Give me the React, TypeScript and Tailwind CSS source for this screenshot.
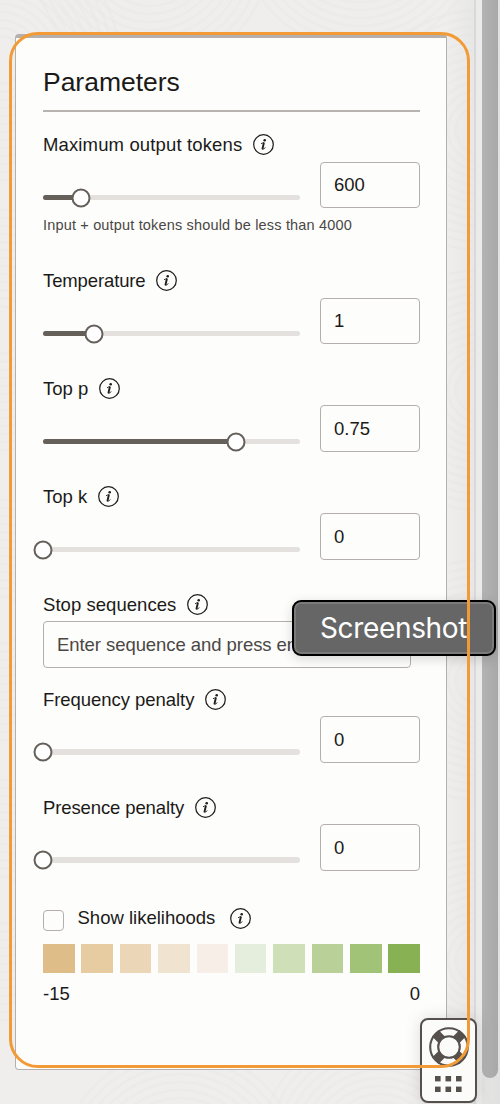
import React from 'react';

function InfoIcon() {
  return (
    <svg width="22" height="22" viewBox="0 0 22 22" className="shrink-0">
      <circle cx="10.5" cy="10.5" r="9.8" fill="none" stroke="#201e1c" strokeWidth="1.25" />
      <circle cx="11.7" cy="6.2" r="1.3" fill="#201e1c" />
      <path d="M8 9.8 Q9 8.8 11 8.8 M9.5 14 Q9.3 15.9 10.8 15 L12.2 13.4" fill="none" stroke="#201e1c" strokeWidth="0.9" />
      <path d="M10.8 9.2 L9.5 14.6" stroke="#201e1c" strokeWidth="1.9" strokeLinecap="round" />
    </svg>
  );
}

function Label({ text, tracking }: { text: string; tracking: string }) {
  return (
    <div className="flex h-[22px] items-center">
      <span className={`whitespace-nowrap text-[18.5px] leading-[22px] ${tracking}`}>{text}</span>
      <span className="ml-[10.5px]">
        <InfoIcon />
      </span>
    </div>
  );
}

type SliderProps = {
  label: string;
  tracking: string;
  value: string;
  fill: number;
  hint?: string;
  boxClass: string;
  trackClass: string;
  rowClass: string;
};

function SliderRow({ label, tracking, value, fill, hint, boxClass, trackClass, rowClass }: SliderProps) {
  return (
    <section className={rowClass}>
      <Label text={label} tracking={tracking} />
      <div className="flex justify-between">
        <div className={`relative w-[257px] rounded-full bg-[#e4e0de] ${trackClass}`}>
          <div className="h-full rounded-full bg-[#66605b]" style={{ width: fill }} />
          <div
            className="absolute top-1/2 size-[19px] -translate-x-1/2 -translate-y-1/2 rounded-full border-2 border-[#66605b] bg-white"
            style={{ left: fill }}
          />
        </div>
        <div className={`flex w-[100px] items-center rounded-[4px] border border-[#b5afab] px-[13px] text-[18.5px] ${boxClass}`}>
          {value}
        </div>
      </div>
      {hint && <p className="mt-[8px] whitespace-nowrap text-[14.5px] leading-[18px] tracking-[0.17px] text-[#4a4744]">{hint}</p>}
    </section>
  );
}

const swatches = [
  'bg-[#dfbd89]',
  'bg-[#e6cca0]',
  'bg-[#ebd7b8]',
  'bg-[#f0e4d0]',
  'bg-[#f7efe7]',
  'bg-[#e5eedc]',
  'bg-[#cfdfb7]',
  'bg-[#b9d198]',
  'bg-[#a1c377]',
  'bg-[#88b153]',
];

function Backdrop() {
  const centers = [
    [0, 60],
    [150, -50],
    [360, -70],
    [480, 130],
    [0, 330],
    [480, 390],
    [0, 620],
    [480, 680],
    [0, 900],
    [480, 960],
    [180, 1170],
    [380, 1150],
  ];
  return (
    <svg className="absolute inset-0" width="500" height="1104" fill="none" stroke="#e6e5e3" strokeWidth="2.5">
      {centers.map(([x, y]) =>
        [24, 32, 40, 48, 56, 64, 72, 80, 88, 96, 104, 112, 120].map((r) => (
          <circle key={`${x}-${y}-${r}`} cx={x} cy={y} r={r} opacity="0.3" />
        )),
      )}
    </svg>
  );
}

function HelpWidget() {
  return (
    <div className="absolute left-[420px] top-[1018px] flex h-[85px] w-[57px] flex-col items-center rounded-[8px] border-2 border-[#55504c] bg-[#fbfbfa] pt-[7px] shadow-[0_0_16px_rgba(0,0,0,0.13)]">
      <svg width="40" height="40" viewBox="0 0 40 40">
        <g stroke="#55504c" fill="none">
          <path d="M6.3 6.3 L13 13 M33.7 6.3 L27 13 M6.3 33.7 L13 27 M33.7 33.7 L27 27" strokeWidth="9" />
          <circle cx="20" cy="20" r="18.8" strokeWidth="2.1" />
          <circle cx="20" cy="20" r="10.8" strokeWidth="2.1" fill="#fbfbfa" />
        </g>
      </svg>
      <svg width="27" height="16" viewBox="0 0 27 16" className="mt-[9px]" fill="#55504c">
        {[0, 10.5, 21].map((x) => (
          <g key={x}>
            <rect x={x} y="0" width="5.6" height="5.4" />
            <rect x={x} y="10.6" width="5.6" height="5.4" />
          </g>
        ))}
      </svg>
    </div>
  );
}

export default function App() {
  return (
    <div className="relative h-[1104px] w-[500px] overflow-hidden bg-[#efeeed] font-['Liberation_Sans',Arial,sans-serif] text-[#1b1a18]">
      <Backdrop />
      <div className="absolute inset-y-0 right-0 flex w-[53px] bg-linear-to-r from-transparent to-[#d8d8d8]/60">
        <div className="ml-[27px] w-[2px] bg-[#d9d9da]" />
        <div className="w-[6px] bg-[#ebebec]" />
        <div className="h-[1078px] w-[16px] rounded-b-full bg-linear-to-r from-[#b3b3b3] to-[#a8a8a8]" />
      </div>

      <div className="relative ml-[15px] pt-[34px]">
        <main className="h-[1036px] w-[432px] rounded-[4px] border border-t-4 border-[#b5b0ac] bg-[#fdfdfc] pl-[27px] pt-[27px]">
          <div className="w-[377px]">
            <h1 className="h-[47px] border-b-2 border-[#b8b3ae] text-[26.5px] leading-[34px] tracking-[-0.02px]">Parameters</h1>
            <div className="pt-[22px]">
              <SliderRow label="Maximum output tokens" tracking="tracking-[0.14px]" value="600" fill={38} hint="Input + output tokens should be less than 4000" rowClass="h-[136px]" boxClass="mt-[6px] h-[46px]" trackClass="mt-[39px] h-[5px]" />
              <SliderRow label="Temperature" tracking="tracking-[-0.12px]" value="1" fill={51} rowClass="h-[108px]" boxClass="mt-[6px] h-[46px]" trackClass="mt-[39px] h-[5px]" />
              <SliderRow label="Top p" tracking="tracking-[0px]" value="0.75" fill={192.5} rowClass="h-[108px]" boxClass="mt-[5px] h-[47px]" trackClass="mt-[39px] h-[5px]" />
              <SliderRow label="Top k" tracking="tracking-[0px]" value="0" fill={0} rowClass="h-[108px]" boxClass="mt-[5px] h-[47px]" trackClass="mt-[39px] h-[5px]" />
              <section className="h-[95px]">
                <Label text="Stop sequences" tracking="tracking-[0.05px]" />
                <div className="mt-[5px] flex h-[47px] w-[368px] items-center rounded-[4px] border border-[#b5afab] px-[13px] text-[18.5px] tracking-[-0.06px] text-[#4a4744]">
                  Enter sequence and press enter
                </div>
              </section>
              <SliderRow label="Frequency penalty" tracking="tracking-[-0.05px]" value="0" fill={0} rowClass="h-[108px]" boxClass="mt-[5px] h-[47px]" trackClass="mt-[38px] h-[6px]" />
              <SliderRow label="Presence penalty" tracking="tracking-[-0.12px]" value="0" fill={0} rowClass="h-[108px]" boxClass="mt-[5px] h-[47px]" trackClass="mt-[38px] h-[6px]" />
            </div>
            <div className="flex h-[39px] items-start">
              <span className="mt-[5px] size-[21px] rounded-[4px] border border-[#b5afab]" />
              <span className="ml-[13.5px] mt-[2px] text-[18.5px] leading-[22px]">Show likelihoods</span>
              <span className="ml-[15px] mt-[3px]">
                <InfoIcon />
              </span>
            </div>
            <div className="flex justify-between">
              {swatches.map((color) => (
                <span key={color} className={`h-[29px] w-[31.5px] ${color}`} />
              ))}
            </div>
            <div className="mt-[10px] flex justify-between text-[18.5px] leading-[22px]">
              <span>-15</span>
              <span>0</span>
            </div>
          </div>
        </main>
      </div>

      <HelpWidget />
      <div className="absolute left-[292px] top-[600px] flex h-[56px] w-[204px] items-center rounded-[9px] border-2 border-black bg-[#666] pl-[26px] font-['Inter',sans-serif] text-[28px] text-white shadow-[inset_0_0_0_2px_#7b7b7b,0_3px_12px_rgba(0,0,0,0.15)]">
        <span className="tracking-[-0.35px]">Screenshot</span>
      </div>
      <div className="pointer-events-none absolute left-[9px] top-[31.5px] h-[1036px] w-[461px] rounded-[29px] border-[3px] border-[#f29b36]" />
    </div>
  );
}
